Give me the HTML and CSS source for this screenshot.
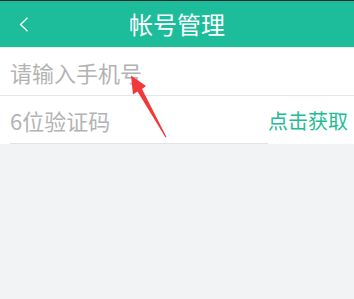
FILE: index.html
```html
<!DOCTYPE html>
<html lang="zh-CN">
<head>
<meta charset="utf-8">
<title>帐号管理</title>
<link rel="stylesheet" href="styles.css">
</head>
<body>
<div class="status"></div>
<header class="header">
  <span class="back">
    <svg width="10" height="15" viewBox="0 0 10 15"><path d="M8.5 0.8 L1.5 7.5 L8.5 14.2" fill="none" stroke="#fff" stroke-width="1.3"/></svg>
  </span>
  <h1 class="title">帐号管理</h1>
  <span class="spacer"></span>
</header>
<main class="form">
  <div class="row row-phone"><span class="placeholder">请输入手机号</span></div>
  <div class="row row-code">
    <span class="code-field"><span class="placeholder">6位验证码</span></span>
    <span class="get-code">点击获取</span>
  </div>
</main>
<svg class="arrow" width="354" height="299" viewBox="0 0 354 299">
  <polygon points="131,75.5 146,86 142,89 166.5,137 165.5,137.5 137.5,91.5 133,94.5" fill="#f3383a"/>
</svg>
</body>
</html>
```

FILE: styles.css
```css
html, body {
  margin: 0;
  padding: 0;
}
body {
  background: #f2f3f5;
  font-family: "Noto Sans CJK SC", "Noto Sans", sans-serif;
  width: 354px;
  height: 299px;
  overflow: hidden;
  position: relative;
}
.status {
  height: 1px;
  background: #1e2b2b;
}
.header {
  height: 46px;
  background: #1dbc9b;
  display: grid;
  grid-template-columns: 1fr auto 1fr;
  align-items: center;
}
.back {
  display: flex;
  align-items: center;
  padding-left: 19px;
  height: 15px;
}
.back svg { display: block; }
.title {
  margin: 0;
  font-size: 24px;
  font-weight: 400;
  color: #ffffff;
  line-height: 46px;
}
.form {
  background: #ffffff;
  border-top: 1px solid #e9eaea;
}
.row {
  height: 48px;
  display: flex;
  align-items: center;
  box-sizing: border-box;
}
.row-phone {
  padding-left: 10px;
  border-bottom: 1px solid #e6e6e6;
}
.row-code {
  justify-content: space-between;
  padding: 0 6px 0 10px;
}
.code-field {
  flex: 0 0 258px;
  height: 48px;
  display: flex;
  align-items: center;
  border-bottom: 1px solid #e3e3e3;
  box-sizing: border-box;
}
.placeholder {
  font-size: 22px;
  color: #b3b3b3;
  white-space: nowrap;
}
.get-code {
  font-size: 20px;
  color: #23bb96;
  white-space: nowrap;
}
.arrow {
  position: absolute;
  left: 0;
  top: 0;
  pointer-events: none;
}
```
